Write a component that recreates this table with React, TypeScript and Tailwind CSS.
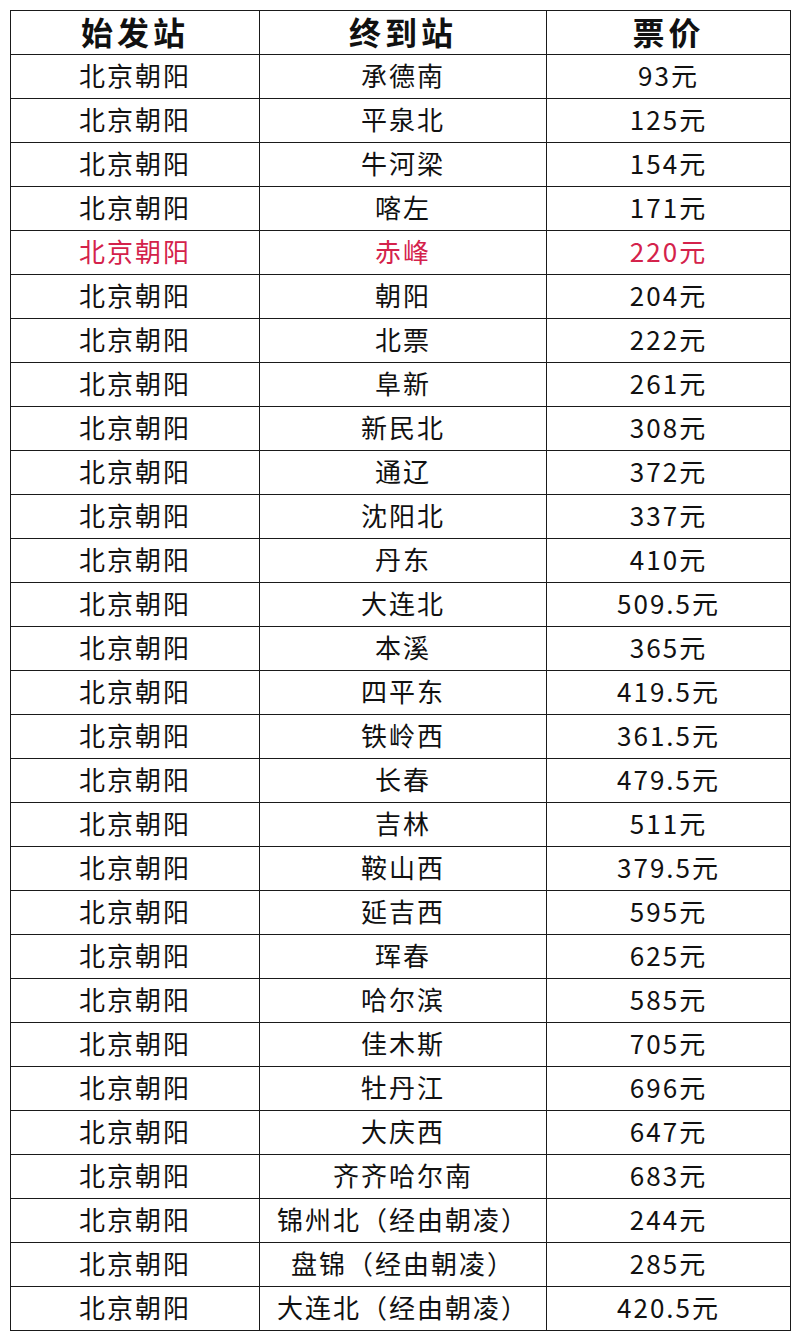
const rows: [string, string, boolean?][] = [
  ["承德南", "93元"],
  ["平泉北", "125元"],
  ["牛河梁", "154元"],
  ["喀左", "171元"],
  ["赤峰", "220元", true],
  ["朝阳", "204元"],
  ["北票", "222元"],
  ["阜新", "261元"],
  ["新民北", "308元"],
  ["通辽", "372元"],
  ["沈阳北", "337元"],
  ["丹东", "410元"],
  ["大连北", "509.5元"],
  ["本溪", "365元"],
  ["四平东", "419.5元"],
  ["铁岭西", "361.5元"],
  ["长春", "479.5元"],
  ["吉林", "511元"],
  ["鞍山西", "379.5元"],
  ["延吉西", "595元"],
  ["珲春", "625元"],
  ["哈尔滨", "585元"],
  ["佳木斯", "705元"],
  ["牡丹江", "696元"],
  ["大庆西", "647元"],
  ["齐齐哈尔南", "683元"],
  ["锦州北（经由朝凌）", "244元"],
  ["盘锦（经由朝凌）", "285元"],
  ["大连北（经由朝凌）", "420.5元"],
]

const font = { fontFamily: '"Noto Sans CJK SC", "Noto Sans", sans-serif' }

export default function App() {
  return (
    <div className="min-h-[1343px] bg-white pt-[10px] pl-[10px]" style={font}>
      <table className="w-[780px] table-fixed border-collapse text-center text-[#111]">
        <colgroup>
          <col className="w-[249px]" />
          <col className="w-[287px]" />
          <col className="w-[244px]" />
        </colgroup>
        <thead>
          <tr className="h-[44px]">
            {["始发站", "终到站", "票价"].map((h) => (
              <th
                key={h}
                className="border border-[#1a1a1a] p-0 pb-[4px] text-[32px] font-bold leading-none tracking-[4px]"
              >
                {h}
              </th>
            ))}
          </tr>
        </thead>
        <tbody>
          {rows.map(([to, price, red]) => (
            <tr
              key={to}
              className={`h-[44px] text-[26px] leading-none tracking-[2px] ${red ? "text-[#d4224b]" : ""}`}
            >
              <td className="border border-[#1a1a1a] p-0 pb-[4px]">北京朝阳</td>
              <td className="border border-[#1a1a1a] p-0 pb-[4px]">{to}</td>
              <td className="border border-[#1a1a1a] p-0 pb-[4px]">{price}</td>
            </tr>
          ))}
        </tbody>
      </table>
    </div>
  )
}
